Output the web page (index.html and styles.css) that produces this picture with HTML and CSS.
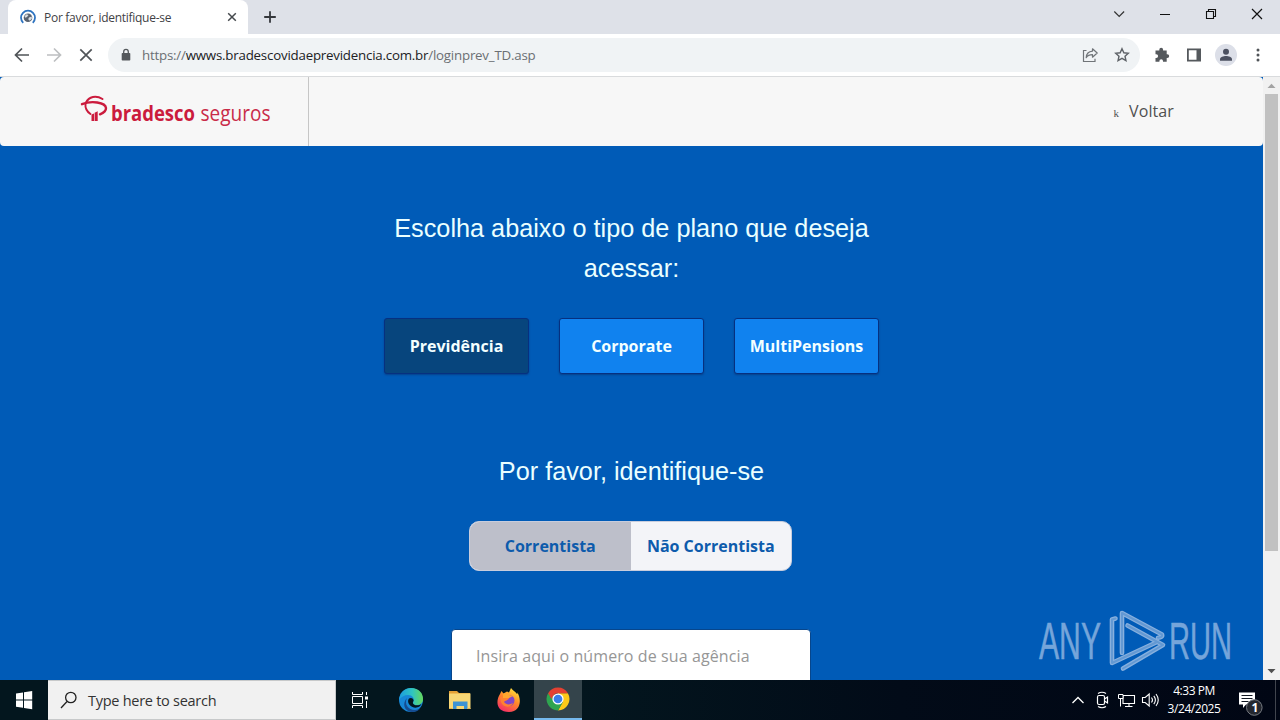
FILE: index.html
```html
<!DOCTYPE html>
<html lang="pt-BR">
<head>
<meta charset="utf-8">
<title>Por favor, identifique-se</title>
<link rel="stylesheet" href="styles.css">
</head>
<body>
<div class="tabstrip">
  <div class="tab">
    <svg class="favicon" width="16" height="16" viewBox="0 0 16 16"><path d="M3.2 13.800A7 7 0 1 1 12.800 13.800" fill="none" stroke="#2f74c0" stroke-width="1.800"/><circle cx="8" cy="8.700" r="4.300" fill="#596270"/><path d="M4.500 7.200 6.500 5.200l2 .8-1.500 2-1.600.7zM9 8.400l2.800-.8v2.200l-2 2-1.600-1.600z" fill="#d8dde2"/></svg>
    <span class="tab-title">Por favor, identifique-se</span>
    <svg class="tab-close" width="10" height="10" viewBox="0 0 10 10"><path d="M1.200 1.200l7.600 7.600M8.800 1.200L1.200 8.800" stroke="#45494d" stroke-width="1.500"/></svg>
  </div>
  <svg class="new-tab" width="14" height="14" viewBox="0 0 14 14"><path d="M7 1.200v11.600M1.200 7h11.600" stroke="#35383c" stroke-width="1.800"/></svg>
  <div class="window-controls">
    <svg viewBox="0 0 46 28"><path d="M18.300 11.500l4.900 5 4.900-5" fill="none" stroke="#333" stroke-width="1.200"/></svg>
    <svg viewBox="0 0 46 28"><path d="M18 14.500h10" stroke="#111"/></svg>
    <svg viewBox="0 0 46 28"><path d="M18.500 11.500h7v7h-7zM20.500 11V9.500h7v7H26" fill="none" stroke="#111" stroke-width="1.100"/></svg>
    <svg viewBox="0 0 46 28"><path d="M18 9l10 10M28 9L18 19" stroke="#111" stroke-width="1.200"/></svg>
  </div>
</div>
<div class="toolbar">
  <svg class="tool" viewBox="0 0 32 32"><path d="M23 16H10M16 9.500L9.500 16l6.500 6.500" fill="none" stroke="#505458" stroke-width="1.700"/></svg>
  <svg class="tool" viewBox="0 0 32 32"><path d="M9 16h13M16 9.500l6.500 6.500-6.500 6.500" fill="none" stroke="#bdbfc1" stroke-width="1.700"/></svg>
  <svg class="tool" viewBox="0 0 32 32"><path d="M10.300 10.300l11.400 11.400M21.700 10.300L10.300 21.700" stroke="#505458" stroke-width="1.700"/></svg>
  <div class="omnibox">
    <svg width="10" height="14" viewBox="0 0 10 14"><path d="M2.700 6V3.700a2.300 2.300 0 0 1 4.600 0V6" fill="none" stroke="#54585c" stroke-width="1.300"/><rect x=".7" y="5" width="8.600" height="7.500" rx=".8" fill="#54585c"/></svg>
    <div class="url"><span class="scheme">https://</span><span class="host">wwws.bradescovidaeprevidencia.com.br</span><span class="path">/loginprev_TD.asp</span></div>
    <svg class="tool" viewBox="0 0 32 32"><path d="M12.500 11.500H9.500v11h11.500v-2.700" fill="none" stroke="#707478" stroke-width="1.200"/><path d="M18.500 9.800l4.700 4.200-4.700 4.200v-2.500c-3 0-5 .8-6.300 3 .2-4 2.300-6.300 6.300-6.600z" fill="none" stroke="#707478" stroke-width="1.200" stroke-linejoin="round"/></svg>
    <svg class="tool" viewBox="0 0 32 32"><path d="M16 9.700l1.850 4.050 4.450.5-3.300 3 .95 4.350L16 19.400l-3.950 2.200.95-4.350-3.300-3 4.450-.5z" fill="none" stroke="#5f6368" stroke-width="1.400"/></svg>
  </div>
  <svg class="tool" viewBox="0 0 32 32"><path d="M9.500 11.500h3.800v-.8a1.900 1.900 0 0 1 3.800 0v.8h3.600v3.700h.6a1.900 1.900 0 0 1 0 3.800h-.6v3.800H17v-.8a1.800 1.800 0 0 0-3.600 0v.8H9.500V19h.7a1.900 1.900 0 0 0 0-3.800h-.7z" fill="#55595d"/></svg>
  <svg class="tool" viewBox="0 0 32 32"><path fill-rule="evenodd" d="M9 9.500h14v13H9zM10.800 11.200v9.600h7.700v-9.600z" fill="#55595d"/></svg>
  <svg class="tool" viewBox="0 0 32 32"><circle cx="16" cy="16" r="11" fill="#dcdfe8"/><circle cx="16" cy="12.800" r="3" fill="#4b5060"/><path d="M10 21.700v-1.300c0-2.200 3.500-3.300 6-3.300s6 1.100 6 3.300v1.300z" fill="#4b5060"/></svg>
  <svg class="tool" viewBox="0 0 32 32"><g fill="#505458"><circle cx="16" cy="11" r="1.500"/><circle cx="16" cy="16" r="1.500"/><circle cx="16" cy="21" r="1.500"/></g></svg>
</div>
<div class="viewport">
  <div class="page">
    <div class="site-header">
      <div class="brand">
        <svg width="200" height="40" viewBox="0 0 200 40">
          <g fill="none" stroke="#cb1b3d" stroke-linecap="round"><path d="M6 8.500C9 2.500 16 1 22.500 5" stroke-width="2"/><path d="M2 10.200C11 6.500 25.500 8 26 14c.1 2.500-2.800 5-6 6.300" stroke-width="2.400"/><path d="M5.500 10C5 14 7 17.500 10.500 20" stroke-width="1.900"/></g>
          <path d="M11.500 20.500l2.500-1v7.500h-2.500zM14.600 18.800l3.100-1.500v9.700h-3.100z" fill="#cb1b3d"/>
          <text class="brand-bold" x="31" y="27" textLength="84" lengthAdjust="spacingAndGlyphs">bradesco</text>
          <text class="brand-light" x="120.500" y="27" textLength="70" lengthAdjust="spacingAndGlyphs">seguros</text>
        </svg>
      </div>
      <div class="back-link"><span class="back-glyph">k</span><span>Voltar</span></div>
    </div>
    <div class="content">
      <h1 class="title">Escolha abaixo o tipo de plano que deseja acessar:</h1>
      <div class="plans">
        <div class="plan selected">Previdência</div>
        <div class="plan">Corporate</div>
        <div class="plan">MultiPensions</div>
      </div>
      <h2 class="title subtitle">Por favor, identifique-se</h2>
      <div class="toggle">
        <div class="option active">Correntista</div>
        <div class="option">Não Correntista</div>
      </div>
      <div class="field">Insira aqui o número de sua agência</div>
    </div>
    <svg class="watermark" width="210" height="74" viewBox="0 0 210 74">
      <g class="mark-text"><text x="4" y="53" textLength="62" lengthAdjust="spacingAndGlyphs">ANY</text><text x="134" y="53" textLength="63" lengthAdjust="spacingAndGlyphs">RUN</text></g>
      <g fill="none" stroke-linejoin="round" stroke-linecap="round">
        <g stroke="#87b0de" stroke-width="4.600"><path d="M80.500 12.500l-3.500 1V57l44-20.500"/><path d="M87 47V7L127 28.500q1 3-4 3.200"/><path d="M92.500 19.500L128 39 88 62.500"/></g>
        <g stroke="#6399d3" stroke-width="2"><path d="M80.500 12.500l-3.500 1V57l44-20.500"/><path d="M87 47V7L127 28.500q1 3-4 3.200"/><path d="M92.500 19.500L128 39 88 62.500"/></g>
      </g>
    </svg>
  </div>
  <div class="scrollbar">
    <svg width="17" height="17" viewBox="0 0 17 17"><path d="M4.500 11l4-4.300 4 4.300z" fill="#a3a3a3"/></svg>
    <div class="thumb"></div>
    <svg width="17" height="17" viewBox="0 0 17 17"><path d="M4.500 6l4 4.300 4-4.300z" fill="#505050"/></svg>
  </div>
</div>
<div class="taskbar">
  <svg class="task" viewBox="0 0 48 40"><path d="M16 13.400l7-1v7.200h-7zM24 12.200l8.200-1.200v8.600H24zM16 20.600h7v7.200l-7-1zM24 20.600h8.200v8.600L24 28z" fill="#fff"/></svg>
  <div class="search">
    <svg width="18" height="20" viewBox="0 0 18 20"><circle cx="10.800" cy="7.500" r="5.200" fill="none" stroke="#222" stroke-width="1.300"/><path d="M7 11.500L1 18" stroke="#222" stroke-width="1.300"/></svg>
    <span>Type here to search</span>
  </div>
  <svg class="task taskview" viewBox="0 0 48 40"><path d="M16.500 12v2.500h10V12M16.500 28v-2.500h10V28M16.500 16.500h10v7h-10zM30.500 12v3M30.500 21v7" fill="none" stroke="#fff"/><path d="M29 16.500h3v3h-3z" fill="#fff"/></svg>
  <svg class="task" viewBox="0 0 48 40">
    <defs><linearGradient id="edge-top" x1="0" x2="1"><stop offset="0" stop-color="#1b9be0"/><stop offset=".55" stop-color="#2fc5c1"/><stop offset="1" stop-color="#66d85a"/></linearGradient></defs>
    <circle cx="24" cy="20" r="12" fill="#1787d7"/>
    <path d="M12 20C13 12 18 8 24 8c8 0 12 5.500 12 11 0 4-3 6-6.500 6-3 0-4.500-1.300-3.300-2.500 2-4-1-7.500-5-7.500-4 0-7.500 2-9.200 5z" fill="url(#edge-top)"/>
    <path d="M20 18c-3 6 1 12 8 12 2 0 4-.8 5.500-1.700-2.500 3-6 4-9.500 3.700-7-1-9-9-4-14z" fill="#154c91"/>
    <path d="M22 18.500c2-1.500 4.800 0 4.600 2.300-.8 1.200-1.200 2.500.3 3.700 2.500 1.500 5.500.8 7.600-.4-1.500 3.500-6 4.500-9.500 2.700-3.500-1.800-5-5.800-3-8.300z" fill="#03161e"/>
  </svg>
  <svg class="task" viewBox="0 0 48 40"><path d="M13 11h8l2 2h11v4H13z" fill="#e5a135"/><path d="M13 13.500h21.500V29H13z" fill="#f8d775"/><path d="M17 21.500h14.500V29H28v-3h-7.500v3H17z" fill="#3c93d4"/><path d="M13 28h3.500v1H13zM31.500 28h3v1h-3z" fill="#e6b551"/></svg>
  <svg class="task" viewBox="0 0 48 40">
    <defs><linearGradient id="fire" x1=".8" y1="0" x2=".25" y2="1"><stop offset="0" stop-color="#ffe83d"/><stop offset=".45" stop-color="#ff8b29"/><stop offset="1" stop-color="#f52b68"/></linearGradient></defs>
    <path d="M15 14l1.500-3 2 2.500 3.500-2 2 1 2-4.500c2 3 4 3 6 6 1-.5 0-2 0-2 5 7 4 20-8 20S10 22 15 14z" fill="url(#fire)"/><circle cx="24" cy="20.500" r="5.500" fill="#8147c7"/><path d="M15 17c4-1 5 1 9 1-1 3-4 2-5 4 2 3 6 3 9 1-2 5-10 5-12-1z" fill="#ff8130"/><path d="M18 14c2-2 5-1 6 1l4 1-4 2h-6z" fill="#ffa62d"/>
  </svg>
  <svg class="task current" viewBox="0 0 48 40">
    <path d="M24 20V14h10.400A12 12 0 0 1 24 32l5.200-9z" fill="#fbc918"/><path d="M13.600 14A12 12 0 0 0 24 32l5.200-9-5.200-3z" fill="#2fa44f"/><path d="M13.600 14l5.200 9 5.200-3-4-5z" fill="#2fa44f"/><path d="M13.600 14A12 12 0 0 1 34.400 14H24a6 6 0 0 0-5.400 3.500l-1.500 2.500z" fill="#e34132"/><circle cx="24" cy="20" r="5.900" fill="#fff"/><circle cx="24" cy="20" r="4.600" fill="#397ee8"/>
  </svg>
  <div class="tray">
    <svg viewBox="0 0 24 40"><path d="M5.500 23l5.500-5.500 5.500 5.500" fill="none" stroke="#fff" stroke-width="1.300"/></svg>
    <svg viewBox="0 0 24 40"><g fill="none" stroke="#fff" stroke-width="1.200"><rect x="6.500" y="15.500" width="7" height="9" rx="1.500"/><path d="M13.500 19l3-2v6l-3-2M7 13.500q4-2.500 8 0M7 26.500q4 2.500 8 0"/></g></svg>
    <svg viewBox="0 0 24 40"><path d="M8 15.500h11.500v8H8zM14 23.500v3M10 26.500h7.500" fill="none" stroke="#fff" stroke-width="1.100"/><path d="M3.500 14.500h4.500v4h-4.500zM5.500 18.500v8" fill="#020916" stroke="#fff"/></svg>
    <svg viewBox="0 0 24 40"><path d="M3.500 17.500h2.700l4-3.500v12l-4-3.500H3.500zM12.500 17.500q2 2.500 0 5M14.800 15.800q3.200 4.200 0 8.400M17 14q4.500 6 0 12" fill="none" stroke="#fff" stroke-width="1.100"/></svg>
    <div class="clock"><span>4:33 PM</span><span>3/24/2025</span></div>
    <svg class="notice" viewBox="0 0 51 40"><path d="M15 12.500h16v12H22l-3 3.500v-3.500h-4z" fill="#fff"/><path d="M17.500 15.500h11M17.500 18.500h11M17.500 21.500h7" stroke="#111722"/><circle cx="30.300" cy="27.500" r="7.800" fill="#24272f" stroke="#777b82"/><text x="27.500" y="32" class="badge-count">1</text></svg>
  </div>
</div>
</body>
</html>
```
FILE: styles.css
```css
* { box-sizing: border-box; }
body { margin: 0; width: 1280px; height: 720px; overflow: hidden; display: flex; flex-direction: column; font-family: "Open Sans", "Noto Sans", sans-serif; }
svg { display: block; flex: none; }

.tabstrip { height: 34px; flex: none; display: flex; background: #dee1e8; }
.tab { width: 240px; height: 34px; margin-left: 8px; padding: 0 11px 0 12px; display: flex; align-items: center; background: #fff; border-radius: 8px 8px 0 0; }
.tab-title { margin-left: 8px; flex: 1; white-space: nowrap; font: 12px "Open Sans", sans-serif; letter-spacing: -.28px; color: #3f4246; }
.new-tab { margin: 10px 0 0 15px; }
.window-controls { margin-left: auto; display: flex; }
.window-controls svg { width: 46px; height: 28px; }

.toolbar { height: 43px; flex: none; display: flex; align-items: center; padding: 0 6px; background: #fff; border-bottom: 1px solid #d9dbdd; }
.tool { width: 32px; height: 32px; }
.omnibox { width: 1032px; height: 34px; margin: 0 6px; padding: 0 2px 0 13px; display: flex; align-items: center; background: #f0f3f5; border-radius: 17px; }
.url { flex: 1; margin-left: 11px; white-space: nowrap; font-size: 13.300px; letter-spacing: -.21px; color: #6b6f73; }
.host { color: #202124; }

.viewport { flex: 1; min-height: 0; display: flex; }
.page { position: relative; width: 1263px; overflow: hidden; background: #005bb7; }
.site-header { height: 69px; display: flex; justify-content: space-between; background: #f7f7f7; border-radius: 4px; }
.brand { width: 309px; padding: 17px 0 0 80px; border-right: 1px solid #c6c6c6; }
.brand-bold { font: bold 21px "Open Sans", sans-serif; fill: #cb1b3d; }
.brand-light { font: 21px "Open Sans", sans-serif; fill: #c92b48; }
.back-link { padding: 22px 89px 0 0; display: flex; align-items: baseline; gap: 10px; font-size: 16px; line-height: 24px; letter-spacing: .1px; color: #505050; }
.back-glyph { font: 11px "Liberation Serif", serif; }
.content { display: flex; flex-direction: column; align-items: center; }
.title { width: 500px; margin: 62px 0 0; text-align: center; font: 25.250px/40px "Liberation Sans", sans-serif; color: #eaffff; }
.plans { margin-top: 30px; display: flex; gap: 30px; }
.plan { width: 145px; height: 56px; display: flex; align-items: center; justify-content: center; background: #1082ef; border: 1px solid #063080; border-radius: 3px; box-shadow: 0 1px 2px #06418a; font-weight: bold; font-size: 16px; color: #f3ffff; }
.selected { background: #07457d; }
.subtitle { margin-top: 77px; }
.toggle { width: 323px; height: 50px; margin: 30px 2px 0 0; display: flex; border-radius: 10px; overflow: hidden; background: #f3f4f8; border: 1px solid #c8cddd; }
.option { flex: 1; display: flex; align-items: center; justify-content: center; font-weight: bold; font-size: 16px; color: #0d5bac; }
.active { background: #bdbfca; }
.field { width: 360px; height: 56px; margin: 58px 1px 0 0; padding: 0 24px; background: #fff; border: 1px solid #07468c; border-radius: 4px; font-size: 16px; line-height: 52px; letter-spacing: .1px; color: #969696; }
.watermark { position: absolute; right: 18px; bottom: 0; }
.mark-text { font: 52px "Liberation Sans", sans-serif; fill: #75a5da; stroke: #75a5da; stroke-width: .5px; }
.scrollbar { width: 17px; display: flex; flex-direction: column; background: #f1f1f1; }
.thumb { width: 13px; height: 457px; margin: 0 auto auto 2px; background: #c1c1c1; }

.taskbar { height: 40px; flex: none; display: flex; background: linear-gradient(90deg, #03161e 0, #03161e 580px, #020b18 900px, #010614 1280px); }
.task { width: 48px; height: 40px; margin-right: 1px; }
.task:first-child { margin-right: 0; }
.search { width: 288px; height: 40px; padding-left: 12px; display: flex; align-items: center; gap: 10px; background: #f1f1f1; border: 1px solid #c7c9ca; border-left: 0; font-size: 14.500px; color: #333; }
.search span { letter-spacing: -.27px; }
.taskview { margin-right: 3px; }
.current { background: #34444b; border-bottom: 2px solid #76b9ed; }
.tray { margin-left: auto; display: flex; }
.tray svg { width: 24px; height: 40px; }
.clock { width: 61px; padding: 2px 0 0 1px; display: flex; flex-direction: column; align-items: center; font-size: 12px; line-height: 18px; letter-spacing: -.45px; color: #fff; }
.tray .notice { width: 52px; margin-right: 4px; border-right: 1px solid #41454e; }
.badge-count { font: bold 12px "Open Sans", sans-serif; fill: #fff; }
```
